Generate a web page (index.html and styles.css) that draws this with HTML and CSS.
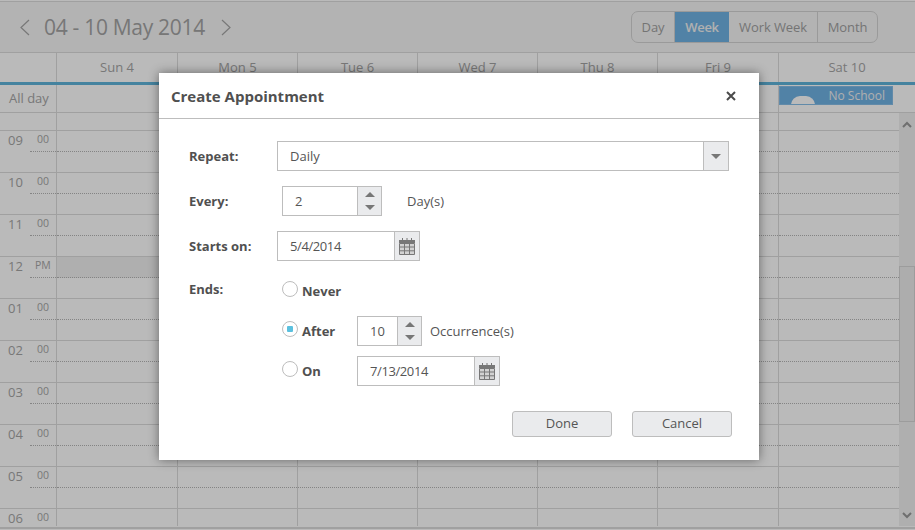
FILE: index.html
```html
<!DOCTYPE html>
<html lang="en">
<head>
<meta charset="utf-8">
<title>Create Appointment</title>
<link rel="stylesheet" href="styles.css">
</head>
<body>
<div class="scheduler">
  <div class="toolbar">
    <div class="nav">
      <svg class="chev" width="11" height="17" viewBox="0 0 11 17"><path d="M10 1 2 8.5 10 16" /></svg>
      <span class="range">04 - 10 May 2014</span>
      <svg class="chev" width="11" height="17" viewBox="0 0 11 17"><path d="M1 1 9 8.5 1 16" /></svg>
    </div>
    <div class="views">
      <span class="view v-day">Day</span>
      <span class="view v-week active">Week</span>
      <span class="view v-work">Work Week</span>
      <span class="view v-month">Month</span>
    </div>
  </div>
  <div class="days">
    <div class="corner"></div>
    <div class="day">Sun 4</div><div class="day">Mon 5</div><div class="day">Tue 6</div><div class="day">Wed 7</div><div class="day">Thu 8</div><div class="day">Fri 9</div><div class="day last">Sat 10</div>
  </div>
  <div class="allday">
    <div class="allday-label">All day</div>
    <div class="ad"></div><div class="ad"></div><div class="ad"></div><div class="ad"></div><div class="ad"></div><div class="ad"></div>
    <div class="ad last">
      <div class="event"><span class="sun"></span><span>No School</span></div>
    </div>
  </div>
  <div class="body">
    <div class="grid">
      <div class="hour spacer"><div class="axis"></div><div class="cells"><i></i><i></i><i></i><i></i><i></i><i></i><i></i></div></div>
      <div class="hour"><div class="axis"><b>09</b><em>00</em></div><div class="cells half"><i></i><i></i><i></i><i></i><i></i><i></i><i></i></div></div>
      <div class="hour"><div class="axis"><b>10</b><em>00</em></div><div class="cells half"><i></i><i></i><i></i><i></i><i></i><i></i><i></i></div></div>
      <div class="hour"><div class="axis"><b>11</b><em>00</em></div><div class="cells half"><i></i><i></i><i></i><i></i><i></i><i></i><i></i></div></div>
      <div class="hour"><div class="axis"><b>12</b><em class="pm">PM</em></div><div class="cells half noon"><i></i><i></i><i></i><i></i><i></i><i></i><i></i></div></div>
      <div class="hour"><div class="axis"><b>01</b><em>00</em></div><div class="cells half"><i></i><i></i><i></i><i></i><i></i><i></i><i></i></div></div>
      <div class="hour"><div class="axis"><b>02</b><em>00</em></div><div class="cells half"><i></i><i></i><i></i><i></i><i></i><i></i><i></i></div></div>
      <div class="hour"><div class="axis"><b>03</b><em>00</em></div><div class="cells half"><i></i><i></i><i></i><i></i><i></i><i></i><i></i></div></div>
      <div class="hour"><div class="axis"><b>04</b><em>00</em></div><div class="cells half"><i></i><i></i><i></i><i></i><i></i><i></i><i></i></div></div>
      <div class="hour"><div class="axis"><b>05</b><em>00</em></div><div class="cells half"><i></i><i></i><i></i><i></i><i></i><i></i><i></i></div></div>
      <div class="hour tail"><div class="axis"><b>06</b><em>00</em></div><div class="cells"><i></i><i></i><i></i><i></i><i></i><i></i><i></i></div></div>
    </div>
    <div class="scrollbar">
      <svg class="sb-icon" width="10" height="7" viewBox="0 0 10 7"><path d="M1 6 5 2 9 6"/></svg>
      <div class="sb-space top"></div>
      <div class="sb-thumb"></div>
      <div class="sb-space"></div>
      <svg class="sb-icon" width="10" height="7" viewBox="0 0 10 7"><path d="M1 1 5 5 9 1"/></svg>
    </div>
  </div>
  <div class="footer"></div>
</div>
<div class="overlay"></div>

<div class="dialog">
  <div class="dlg-head">
    <span class="dlg-title">Create Appointment</span>
    <svg class="dlg-close" width="10" height="10" viewBox="0 0 10 10"><path d="M1 1 9 9M9 1 1 9"/></svg>
  </div>
  <div class="dlg-body">
    <div class="row r-repeat">
      <label class="lbl">Repeat:</label>
      <div class="ctl select">
        <span class="val">Daily</span>
        <span class="btn btn-drop"><svg width="10" height="5" viewBox="0 0 10 5"><path class="tri" d="M0 0H10L5 5Z"/></svg></span>
      </div>
    </div>
    <div class="row r-every">
      <label class="lbl">Every:</label>
      <div class="ctl spin spin-every">
        <span class="val">2</span>
        <span class="btn btn-spin">
          <svg width="10" height="5" viewBox="0 0 10 5"><path class="tri" d="M5 0 10 5H0Z"/></svg>
          <svg width="10" height="5" viewBox="0 0 10 5"><path class="tri" d="M0 0H10L5 5Z"/></svg>
        </span>
      </div>
      <span class="unit unit-day">Day(s)</span>
    </div>
    <div class="row r-start">
      <label class="lbl">Starts on:</label>
      <div class="ctl date">
        <span class="val">5/4/2014</span>
        <span class="btn btn-cal"><svg class="cal" width="16" height="17" viewBox="0 0 16 17"><path class="cal-top" d="M3 0h1v2H3zM7.500 0h1v2h-1zM12 0h1v2h-1zM0 2h16v3H0z"/><path class="cal-grid" d="M.5 5.500h15v11H.5zM.5 9h15M.5 12.800h15M5.500 5.500v11M10.500 5.500v11"/></svg></span>
      </div>
    </div>
    <div class="ends">
      <label class="lbl lbl-ends">Ends:</label>
      <div class="end-opts">
        <div class="opt o-never">
          <span class="radio"></span><span class="opt-text">Never</span>
        </div>
        <div class="opt o-after">
          <span class="radio checked"></span><span class="opt-text">After</span>
          <div class="ctl spin spin-after">
            <span class="val">10</span>
            <span class="btn btn-spin">
              <svg width="10" height="5" viewBox="0 0 10 5"><path class="tri" d="M5 0 10 5H0Z"/></svg>
              <svg width="10" height="5" viewBox="0 0 10 5"><path class="tri" d="M0 0H10L5 5Z"/></svg>
            </span>
          </div>
          <span class="unit unit-occ">Occurrence(s)</span>
        </div>
        <div class="opt o-on">
          <span class="radio"></span><span class="opt-text">On</span>
          <div class="ctl date">
            <span class="val">7/13/2014</span>
            <span class="btn btn-cal"><svg class="cal" width="16" height="17" viewBox="0 0 16 17"><path class="cal-top" d="M3 0h1v2H3zM7.500 0h1v2h-1zM12 0h1v2h-1zM0 2h16v3H0z"/><path class="cal-grid" d="M.5 5.500h15v11H.5zM.5 9h15M.5 12.800h15M5.500 5.500v11M10.500 5.500v11"/></svg></span>
          </div>
        </div>
      </div>
    </div>
    <div class="actions">
      <button class="action" type="button">Done</button>
      <button class="action" type="button">Cancel</button>
    </div>
  </div>
</div>
</body>
</html>
```
FILE: styles.css
```css
* { box-sizing: border-box; }
html, body { margin: 0; height: 100%; }
body {
  width: 915px;
  height: 530px;
  overflow: hidden;
  position: relative;
  background: #fff;
  font-family: "Open Sans", "Noto Sans", sans-serif;
  color: #444;
}

/* Scheduler behind the modal */
.scheduler {
  height: 530px;
  display: flex;
  flex-direction: column;
  padding-top: 1px;
}
.toolbar {
  height: 52px;
  flex: none;
  display: flex;
  align-items: center;
  justify-content: space-between;
  background: #f6f6f6;
  border-top: 1px solid #dcdcdc;
  border-bottom: 1px solid #dcdcdc;
  padding: 0 37px 0 19px;
}
.nav { display: flex; align-items: center; }
.chev { fill: none; stroke: #a5a5a5; stroke-width: 1.2; }
.range {
  font-size: 21px;
  color: #a3a3a3;
  margin: 0 16px 0 14px;
  letter-spacing: -0.3px;
}
.views {
  display: flex;
  height: 32px;
  border: 1px solid #d4d4d4;
  border-radius: 7px;
  overflow: hidden;
}
.view {
  display: flex;
  align-items: center;
  justify-content: center;
  font-size: 13px;
  letter-spacing: -0.1px;
  color: #a0a0a0;
  border-right: 1px solid #d4d4d4;
}
.v-day { width: 43px; }
.v-week { width: 54px; }
.v-work { width: 89px; }
.v-month { width: 59px; border-right: 0; }
.view.active { background: #70b2e4; color: #f2f2f2; font-weight: 600; border-right: 0; letter-spacing: -0.3px; }

.days {
  height: 29px;
  flex: none;
  display: grid;
  grid-template-columns: 57px 121px repeat(4, 120px) 121px 1fr;
  background: #ffffff;
}
.corner { border-right: 1px solid #dcdcdc; }
.day {
  border-right: 1px solid #dcdcdc;
  text-align: center;
  font-size: 13px;
  line-height: 29px;
  color: #a5a5a5;
}
.day.last { border-right: 0; }
.allday {
  height: 31px;
  flex: none;
  display: grid;
  grid-template-columns: 57px 121px repeat(4, 120px) 121px 1fr;
  background: #fff;
  border-top: 3px solid #5fb4da;
  border-bottom: 1px solid #dcdcdc;
}
.allday-label {
  border-right: 1px solid #dcdcdc;
  font-size: 13px;
  line-height: 27px;
  padding-left: 9px;
  color: #a5a5a5;
}
.ad { border-right: 1px solid #dcdcdc; }
.ad.last { border-right: 0; padding-top: 1px; }
.event {
  width: 114px;
  height: 19px;
  background: #70b2e4;
  border: 1px solid #85bde8;
  color: #f0f0f0;
  font-size: 12px;
  line-height: 18px;
  display: flex;
  justify-content: flex-end;
  padding-right: 7px;
  overflow: hidden;
  position: relative;
}
.sun {
  position: absolute;
  left: 11px;
  bottom: -1px;
  width: 24px;
  height: 9px;
  border-radius: 12px 12px 0 0;
  background: #fff;
}

.body { flex: 1; display: flex; min-height: 0; }
.grid { flex: 1; display: flex; flex-direction: column; background: #fff; }
.hour {
  height: 42px;
  flex: none;
  display: flex;
  border-bottom: 1px solid #dcdcdc;
}
.hour.spacer { height: 18px; }
.hour.tail { height: 17px; border-bottom: 0; }
.axis {
  width: 57px;
  flex: none;
  border-right: 1px solid #dcdcdc;
  position: relative;
  padding-left: 8px;
  display: flex;
}
.axis b { font-weight: 400; font-size: 13px; line-height: 18px; color: #a5a5a5; width: 29px; }
.axis em { font-style: normal; font-size: 10.5px; line-height: 16px; color: #a5a5a5; }
.axis em.pm { margin-left: -2px; }
.hour:not(.spacer):not(.tail) .axis::after {
  content: "";
  position: absolute;
  left: 30px;
  right: 0;
  top: 20px;
  border-top: 1px dotted #b5b5b5;
}
.cells {
  flex: 1;
  display: grid;
  grid-template-columns: 121px repeat(4, 120px) 121px 1fr;
}
.cells i { border-right: 1px solid #dcdcdc; position: relative; display: block; }
.cells i:last-child { border-right: 0; }
.half i::after {
  content: "";
  position: absolute;
  left: 0;
  right: 0;
  top: 20px;
  border-top: 1px dotted #b5b5b5;
}
.noon i:first-child { background: linear-gradient(#f0f0f0 0 21px, #fff 21px); }

.scrollbar {
  width: 16px;
  flex: none;
  background: #f0f0f0;
  display: flex;
  flex-direction: column;
  align-items: center;
  padding: 5px 0 7px;
  position: relative;
}
.sb-icon { fill: none; stroke: #999; stroke-width: 2; flex: none; }
.sb-icon:first-child { margin-top: 3px; }
.sb-space { flex: 1; }
.sb-space.top { flex: none; height: 138px; }
.sb-thumb {
  flex: none;
  width: 16px;
  height: 156px;
  background: #eeeeee;
  border: 1px solid #d6d6d6;
}
.footer {
  flex: none;
  height: 4px;
  padding-top: 1px;
  background: #fff;
}
.footer::before {
  content: "";
  display: block;
  height: 2px;
  background: #dcdcdc;
}

.overlay {
  position: absolute;
  inset: 0;
  background: rgba(0, 0, 0, 0.27);
}

/* Modal */
.dialog {
  position: absolute;
  left: 159px;
  top: 73px;
  width: 600px;
  height: 387px;
  background: #fff;
  box-shadow: 0 0 10px rgba(0, 0, 0, 0.45);
}
.dlg-head {
  height: 46px;
  border-bottom: 1px solid #bdbdbd;
  display: flex;
  align-items: center;
  justify-content: space-between;
  padding: 0 23px 0 12px;
}
.dlg-title { font-size: 15px; font-weight: 700; color: #505050; }
.dlg-close { fill: none; stroke: #4a4a4a; stroke-width: 2; }
.dlg-body { padding: 22px 30px 0; }

.row { display: flex; align-items: center; height: 30px; margin-bottom: 15px; }
.lbl {
  font-size: 13px;
  font-weight: 700;
  color: #505050;
  width: 88px;
  flex: none;
}
.ctl {
  display: flex;
  height: 30px;
  border: 1px solid #bdbdbd;
  background: #fff;
  font-size: 13px;
  color: #555;
}
.val { flex: 1; line-height: 28px; padding-left: 12px; }
.btn {
  flex: none;
  width: 24px;
  background: #eaebed;
  border-left: 1px solid #bdbdbd;
  display: flex;
  align-items: center;
  justify-content: center;
}
.tri { fill: #777; }
.select { width: 452px; }
.select .btn { width: 25px; }
.btn-spin { flex-direction: column; justify-content: center; gap: 8px; }
.spin-every { width: 100px; margin-left: 5px; }
.unit { font-size: 13px; color: #555; }
.unit-day { margin-left: 25px; }
.unit-occ { margin-left: 8px; }
.date { width: 143px; }
.date .val { letter-spacing: -0.4px; }
.date .btn { width: 25px; }
.cal-top { fill: #777; }
.cal-grid { fill: #d2d2d2; stroke: #777; stroke-width: 1; }

.ends { display: flex; align-items: flex-start; margin-top: -5px; }
.lbl-ends { line-height: 18px; margin-top: 9px; }
.end-opts { margin-left: 5px; display: flex; flex-direction: column; }
.opt { display: flex; align-items: center; height: 30px; position: relative; }
.o-never { margin-bottom: 10px; margin-top: 5px; }
.o-after { margin-bottom: 10px; }
.radio {
  width: 16px;
  height: 16px;
  border-radius: 50%;
  border: 1px solid #bdbdbd;
  background: #fff;
  flex: none;
  margin-right: 4px;
  position: relative;
  top: -2px;
}
.radio.checked::after {
  content: "";
  position: absolute;
  left: 4px;
  top: 4px;
  width: 6px;
  height: 6px;
  border-radius: 1px;
  background: #5bc0de;
}
.opt-text { font-size: 13px; font-weight: 700; color: #505050; width: 55px; flex: none; }
.spin-after { width: 65px; }
.actions {
  display: flex;
  justify-content: flex-end;
  gap: 20px;
  margin-top: 25px;
  margin-right: -3px;
}
.action {
  width: 100px;
  height: 26px;
  padding: 0 0 2px;
  background: #eaebed;
  border: 1px solid #bdbdbd;
  border-radius: 3px;
  font: 13px "Open Sans", "Noto Sans", sans-serif;
  color: #555;
}
```
